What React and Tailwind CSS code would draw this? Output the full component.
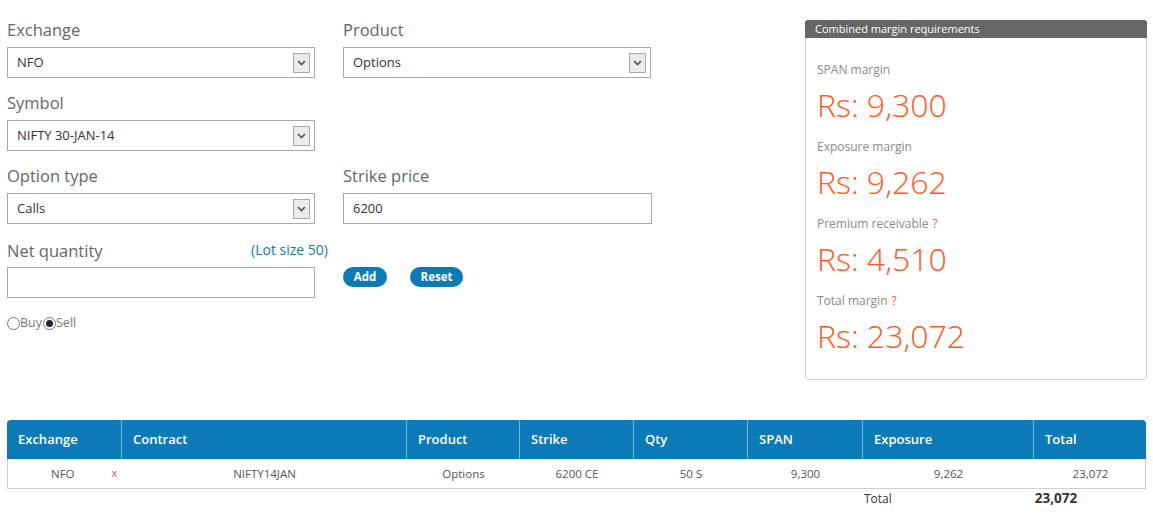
// App.jsx — margin calculator form, summary panel and positions table
const font = { fontFamily: '"Open Sans", "Liberation Sans", sans-serif' };

function Arrow() {
  return (
    <span className="flex h-[20px] w-[17px] items-center justify-center border border-[#a9a9a9] bg-[#ececec]">
      <svg width="9" height="6" viewBox="0 0 9 6">
        <path d="M1 1 L4.5 4.5 L8 1" fill="none" stroke="#555" strokeWidth="1.6" />
      </svg>
    </span>
  );
}

function Select({ value }) {
  return (
    <div className="flex h-[31px] w-[308px] items-center justify-between border border-[#a9a9a9] bg-white pl-[9px] pr-[4px] text-[13px] text-[#333]">
      <span>{value}</span>
      <Arrow />
    </div>
  );
}

function Label({ children }) {
  return <div className="mb-[4px] h-[26px] text-[16.5px] leading-[26px] text-[#666]">{children}</div>;
}

function Field({ label, children }) {
  return (
    <div className="w-[308px]">
      <Label>{label}</Label>
      {children}
    </div>
  );
}

function Radio({ checked }) {
  return (
    <span className="flex h-[13px] w-[13px] items-center justify-center rounded-full border border-[#777] bg-white">
      {checked && <span className="h-[7px] w-[7px] rounded-full bg-[#222]" />}
    </span>
  );
}

const margins = [
  { label: "SPAN margin", value: "Rs: 9,300" },
  { label: "Exposure margin", value: "Rs: 9,262" },
  { label: "Premium receivable", value: "Rs: 4,510", help: true },
  { label: "Total margin", value: "Rs: 23,072", help: true },
];

const cols = "grid grid-cols-[114px_285px_113px_114px_114px_115px_171px_113px]";

export default function App() {
  return (
    <div className="min-h-[516px] w-[1153px] bg-white" style={font}>
      <div className="flex justify-between pl-[7px] pr-[6px] pt-[17px]">
        {/* Form */}
        <div className="flex flex-col gap-[12px]">
          <div className="flex gap-[28px]">
            <Field label="Exchange"><Select value="NFO" /></Field>
            <Field label="Product"><Select value="Options" /></Field>
          </div>
          <Field label="Symbol"><Select value="NIFTY 30-JAN-14" /></Field>
          <div className="flex gap-[28px]">
            <Field label="Option type"><Select value="Calls" /></Field>
            <Field label="Strike price">
              <div className="flex h-[31px] w-[309px] items-center border border-[#a9a9a9] pl-[9px] text-[13px] text-[#333]">6200</div>
            </Field>
          </div>
          <div className="flex items-end gap-[28px]">
            <div className="w-[308px]">
              <div className="mb-[4px] flex h-[27px] items-center justify-between">
                <span className="mt-[4px] text-[16.5px] text-[#666]">Net quantity</span>
                <span className="-mr-[13px] text-[14px] text-[#1c76b0]">(Lot size 50)</span>
              </div>
              <div className="h-[31px] w-[308px] border border-[#a9a9a9] bg-white" />
            </div>
            <div className="mb-[11px] flex gap-[23px]">
              <button className="h-[20px] w-[44px] rounded-full bg-[#0b7bb8] text-[11.5px] font-bold text-white">Add</button>
              <button className="h-[20px] w-[53px] rounded-full bg-[#0b7bb8] text-[11.5px] font-bold text-white">Reset</button>
            </div>
          </div>
          <div className="mt-[4px] flex items-center text-[12.5px] text-[#777]">
            <Radio />
            <span className="mr-[1px]">Buy</span>
            <Radio checked />
            <span>Sell</span>
          </div>
        </div>

        {/* Margin summary */}
        <div className="mt-[3px] h-[360px] w-[342px] rounded-[3px] border border-[#cfcfcf]">
          <div className="-mx-px -mt-px flex h-[18px] items-center rounded-t-[3px] bg-[#666] pl-[10px] text-[11px] text-white">
            Combined margin requirements
          </div>
          <div className="px-[11px] pt-[22px]">
            {margins.map((m) => (
              <div key={m.label} className="mb-[1px]">
                <div className="h-[20px] text-[12px] leading-[20px] text-[#8a8a8a]">
                  {m.label}
                  {m.help && <span className="ml-[4px] text-[#ff5a1f]">?</span>}
                </div>
                <div className="h-[56px] text-[32px] font-light leading-[50px] text-[#ff5a1f]">{m.value}</div>
              </div>
            ))}
          </div>
        </div>
      </div>

      {/* Positions table */}
      <div className="mx-[7px] mt-[40px] w-[1139px]">
        <div className={`${cols} h-[39px] rounded-t-[4px] bg-[#0b7bb7] text-[13px] font-semibold text-white`}>
          {["Exchange", "Contract", "Product", "Strike", "Qty", "SPAN", "Exposure", "Total"].map((h, i) => (
            <div key={h} className={`flex items-center pl-[11px] ${i > 0 ? "border-l border-[#7ab4d8]" : ""}`}>{h}</div>
          ))}
        </div>
        <div className={`${cols} h-[30px] items-center border border-t-0 border-[#cfcfcf] text-center text-[11.5px] text-[#555]`}>
          <div className="flex items-center pl-[43px]">
            <span>NFO</span>
            <span className="ml-[37px] text-[11px] text-[#e0505a]">x</span>
          </div>
          <div>NIFTY14JAN</div>
          <div>Options</div>
          <div>6200 CE</div>
          <div>50 S</div>
          <div>9,300</div>
          <div>9,262</div>
          <div>23,072</div>
        </div>
        <div className="flex h-[19px] items-center text-[12px] text-[#333]">
          <span className="ml-[857px]">Total</span>
          <span className="ml-[143px] text-[13.5px] font-bold">23,072</span>
        </div>
      </div>
    </div>
  );
}
